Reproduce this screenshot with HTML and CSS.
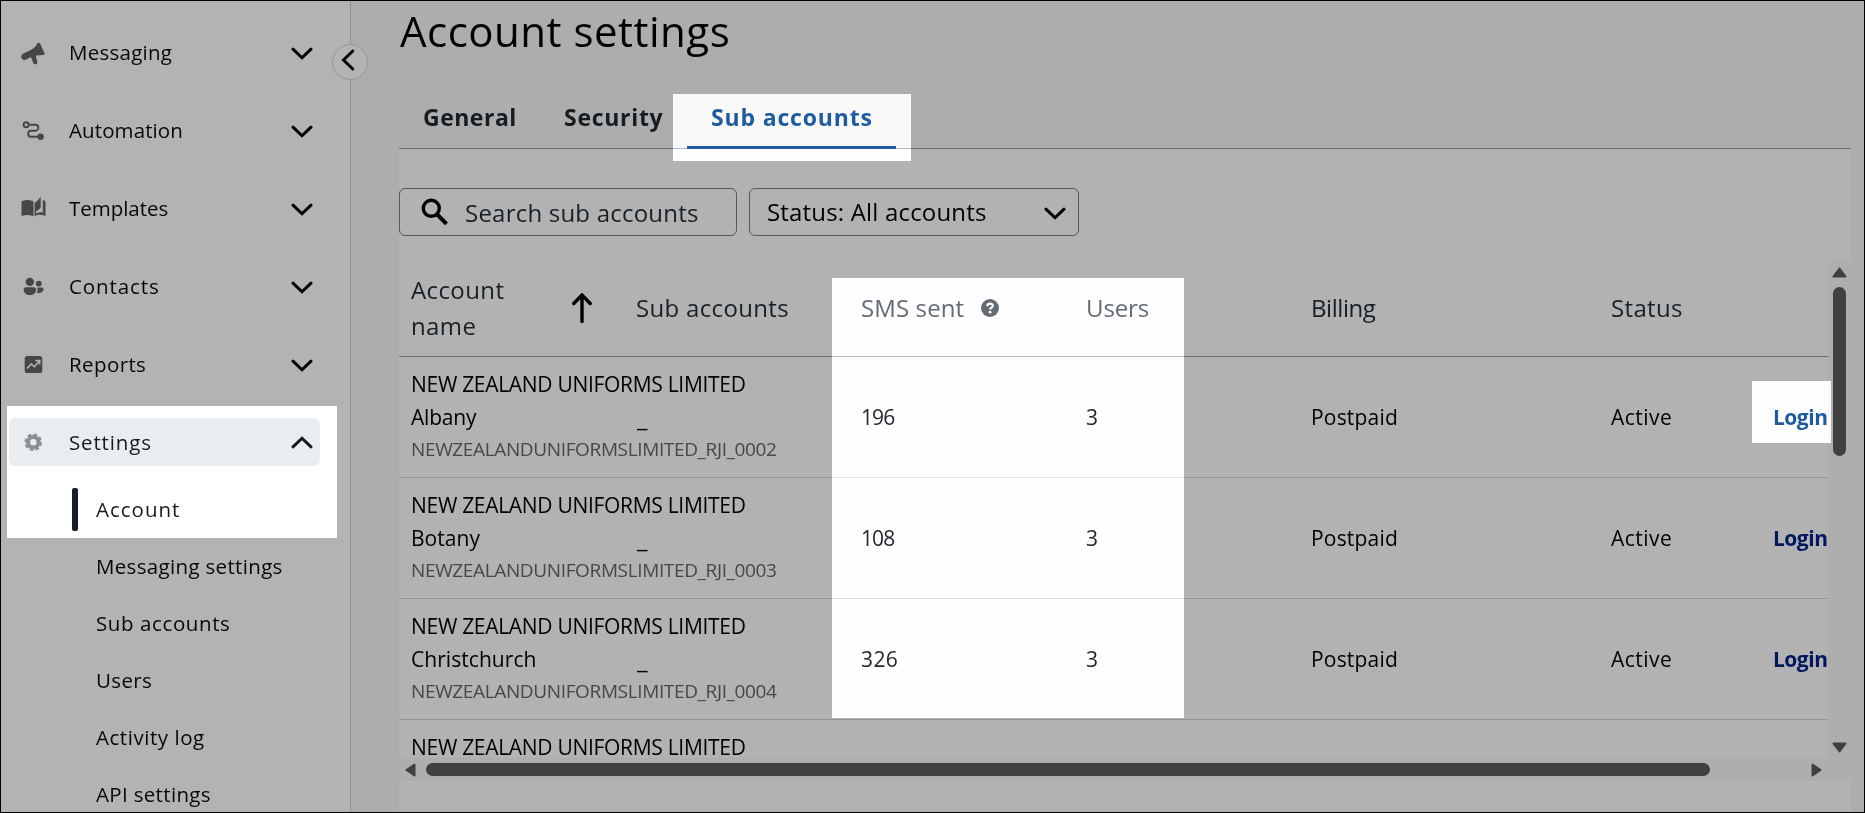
FILE: index.html
```html
<!DOCTYPE html>
<html lang="en">
<head>
<meta charset="utf-8">
<title>Account settings</title>
<link rel="stylesheet" href="styles.css">
</head>
<body>
<svg class="defs" width="0" height="0" aria-hidden="true">
  <symbol id="chev" viewBox="0 0 22 14"><path d="M2 2.2 11 10.8 20 2.2" fill="none" stroke="currentColor" stroke-width="3" stroke-linecap="round"/></symbol>
</svg>
<div class="app">
  <aside class="sidebar">
    <nav class="nav">
      <a class="item"><svg class="ico" viewBox="0 0 28 28"><path d="M19.2 4.8c.8-.4 1.5 0 1.9.7l4.400 9.600c.4 1-.1 1.700-1.100 1.800l-7.600.5 1.500 6.500c.4 2.500-3.200 3.300-4 1l-2.400-6-4.700 2.700c-2 1-4 .2-4.700-1.500-.8-2.200.2-3.900 2-4.700l8.200-3.900c2.500-1.200 4.200-3.100 5.200-5.400.3-.6.6-1 1.300-1.300z"/></svg><span class="w-messaging">Messaging</span><svg class="chev"><use href="#chev"/></svg></a>
      <a class="item"><svg class="ico line" viewBox="0 0 28 28"><circle cx="7.100" cy="8.700" r="2.500"/><path d="M9.600 8.700h6.700a3 3 0 0 1 0 6h-4.200a3 3 0 0 0 0 6H20"/><circle class="dot" cx="21.600" cy="20.700" r="3.200"/></svg><span class="w-automation">Automation</span><svg class="chev"><use href="#chev"/></svg></a>
      <a class="item"><svg class="ico" viewBox="0 0 28 28"><path d="M2.500 7.500c3.500-2 8.500-2 12 0v15c-3.500-2-8.500-2-12-.4zM17 8.300l4.700-5.600v11.400L17 17.500zM15.600 8.500v13.800c3-1.800 6.800-2 10.900-.2V7.200l-2.700-1.300v12.600c-2.500-.4-4.800 0-6.800.9V8z"/></svg><span class="w-templates">Templates</span><svg class="chev"><use href="#chev"/></svg></a>
      <a class="item"><svg class="ico" viewBox="0 0 28 28"><circle cx="10.800" cy="9.900" r="4.200"/><circle cx="19.800" cy="11.600" r="2.900"/><path d="M7 15.300h7.700c1.500 0 2.400 1 2.400 2.300 0 3.500-2.500 5.500-6.200 5.500s-6.300-2-6.300-5.500c0-1.300 1-2.300 2.400-2.300zM18 15.600h4.600c1.100 0 1.900.7 1.900 1.700 0 2.700-2.600 4.200-6.800 3.700 1.100-1.600 1.300-3.600.3-5.400z"/></svg><span class="w-contacts">Contacts</span><svg class="chev"><use href="#chev"/></svg></a>
      <a class="item"><svg class="ico" viewBox="0 0 28 28"><rect x="5.700" y="6" width="17.600" height="17" rx="2.600"/><path class="cut" d="m8 18.500 4.200-4.500 3.200 2.700 5-5.500M16.400 10.600h4.300v4"/></svg><span class="w-reports">Reports</span><svg class="chev"><use href="#chev"/></svg></a>
      <a class="item open"><svg class="ico" viewBox="0 0 28 28"><circle class="gear" cx="14.300" cy="14.300" r="5.200"/><circle class="teeth" cx="14.300" cy="14.300" r="7.600"/></svg><span class="w-settings">Settings</span><svg class="chev up"><use href="#chev"/></svg></a>
    </nav>
    <nav class="subnav">
      <a class="sub current w-account">Account</a>
      <a class="sub w-set">Messaging settings</a>
      <a class="sub w-sub">Sub accounts</a>
      <a class="sub">Users</a>
      <a class="sub w-log">Activity log</a>
      <a class="sub w-set">API settings</a>
    </nav>
    <button class="collapse" aria-label="Collapse"><svg viewBox="0 0 36 36"><path d="M20.800 7 11.500 16l9.300 9" fill="none" stroke="#000" stroke-width="3" stroke-linecap="round"/></svg></button>
  </aside>
  <main class="main">
    <h1>Account settings</h1>
    <div class="tabs">
      <a class="tab">General</a>
      <a class="tab w-sec">Security</a>
      <a class="tab active">Sub accounts</a>
    </div>
    <section class="panel">
      <div class="filters">
        <div class="search"><svg viewBox="0 0 28 28"><circle cx="10.300" cy="10.300" r="8"/><path d="m16.200 16.500 9.300 9.300"/></svg><span>Search sub accounts</span></div>
        <div class="select"><span>Status: All accounts</span><svg class="chev"><use href="#chev"/></svg></div>
      </div>
      <div class="scroller">
        <div class="view">
          <div class="row head">
            <div class="sortable"><span>Account name</span><svg viewBox="0 0 20 30"><path d="M10 28.500V2.500M1.800 10.500 10 2l8.200 8.500" fill="none" stroke="#000" stroke-width="3.400" stroke-linecap="round"/></svg></div>
            <div class="w-hsub">Sub accounts</div>
            <div class="lit grey w-sms">SMS sent<svg class="help" viewBox="0 0 18 18"><circle cx="9" cy="9" r="9"/><path d="M6.300 7.300c0-3.600 5.500-3.400 5.500-.5 0 1.900-2.700 1.900-2.700 3.700"/><circle class="pt" cx="9.100" cy="13.200" r="1.400"/></svg></div>
            <div class="lit grey">Users</div>
            <div class="w-bill">Billing</div>
            <div class="w-stat">Status</div>
            <div></div>
          </div>
          <div class="row">
            <div class="name"><b>NEW ZEALAND UNIFORMS LIMITED</b><b class="w-albany">Albany</b><small>NEWZEALANDUNIFORMSLIMITED_RJI_0002</small></div>
            <div class="none">_</div><div class="lit num">196</div><div class="lit num">3</div><div class="w-post">Postpaid</div><div class="w-active">Active</div><div class="login lit">Login</div>
          </div>
          <div class="row">
            <div class="name"><b>NEW ZEALAND UNIFORMS LIMITED</b><b class="w-plain">Botany</b><small>NEWZEALANDUNIFORMSLIMITED_RJI_0003</small></div>
            <div class="none">_</div><div class="lit num">108</div><div class="lit num">3</div><div class="w-post">Postpaid</div><div class="w-active">Active</div><div class="login">Login</div>
          </div>
          <div class="row">
            <div class="name"><b>NEW ZEALAND UNIFORMS LIMITED</b><b class="w-plain">Christchurch</b><small>NEWZEALANDUNIFORMSLIMITED_RJI_0004</small></div>
            <div class="none">_</div><div class="lit num w-326">326</div><div class="lit num">3</div><div class="w-post">Postpaid</div><div class="w-active">Active</div><div class="login">Login</div>
          </div>
          <div class="row last">
            <div class="name"><b>NEW ZEALAND UNIFORMS LIMITED</b></div>
          </div>
        </div>
        <div class="vbar">
          <svg viewBox="0 0 15 11"><path d="M7.500 1.500 13.500 9.500h-12z"/></svg>
          <div class="vtrack"><i></i></div>
          <svg viewBox="0 0 15 11"><path d="M7.500 9.500 1.500 1.500h12z"/></svg>
        </div>
        <div class="hbar">
          <svg viewBox="0 0 11 14"><path d="M1.500 7 9.500 1.500v11z"/></svg>
          <div class="htrack"><i></i></div>
          <svg viewBox="0 0 11 14"><path d="M9.500 7 1.500 1.500v11z"/></svg>
        </div>
        <div class="corner"></div>
      </div>
    </section>
  </main>
  <div class="spot spot-nav"></div>
  <div class="spot spot-tab"></div>
  <div class="spot spot-cols"></div>
  <div class="spot spot-login"></div>
  <div class="frame"></div>
</div>
</body>
</html>
```

FILE: styles.css
```css
* { box-sizing: border-box; }
body { margin: 0; background: #adadad; font-family: "Open Sans", sans-serif; color: #000; }
.defs { position: absolute; }
.app { position: relative; display: flex; width: 1865px; height: 813px; overflow: hidden; background: #adadad; isolation: isolate; }

/* sidebar */
.sidebar { position: relative; flex: none; width: 351px; background: #b3b3b3; border-right: 1px solid #909797; }
.nav { display: flex; flex-direction: column; gap: 30px; padding: 28px 0 0 9px; }
.item { display: flex; align-items: center; width: 311px; height: 48px; padding: 0 7px 0 10px; border-radius: 6px; font-size: 20.5px; letter-spacing: .1px; color: #04090d; }
.ico { width: 28px; height: 28px; margin-right: 22px; flex: none; fill: #464646; }
.item span { flex: 1; white-space: nowrap; padding-bottom: 1px; }
.line { fill: none; stroke: #464646; stroke-width: 1.9; }
.line .dot { fill: #464646; stroke: none; }
.cut { fill: none; stroke: #b3b3b3; stroke-width: 1.6; }
.gear { fill: none; stroke: #8d8f90; stroke-width: 4; }
.teeth { fill: none; stroke: #8d8f90; stroke-width: 2.4; stroke-dasharray: 3.6 2.369; }
.chev { width: 22px; height: 14px; flex: none; color: #000; position: relative; top: 2px; }
.item.open { position: relative; z-index: 2; background: #e9edf0; color: #151b20; }
.chev.up { transform: rotate(180deg); top: 0; color: #151b20; }
.w-messaging { letter-spacing: .25px; }
.w-templates { letter-spacing: -.03px; }
.w-contacts { letter-spacing: .9px; }
.w-reports { letter-spacing: .4px; }
.w-settings { letter-spacing: .85px; }
.subnav { display: flex; flex-direction: column; padding: 14px 0 0 72px; }
.sub { display: flex; align-items: center; height: 57px; padding-left: 24px; font-size: 20.5px; letter-spacing: .35px; color: #04090d; white-space: nowrap; }
.sub.current { position: relative; z-index: 2; color: #151b20; padding-left: 0; }
.sub.current::before { content: ""; position: relative; top: 1px; width: 6px; height: 43px; margin-right: 18px; border-radius: 2px; background: #17202a; }
.w-account { letter-spacing: .99px; }
.w-set { letter-spacing: .33px; }
.w-sub { letter-spacing: .6px; }
.w-log { letter-spacing: .54px; }
.collapse { position: absolute; left: 332px; top: 44px; width: 36px; height: 36px; padding: 0; border: 1px solid #909797; border-radius: 50%; background: #b3b3b3; }
.collapse svg { display: block; width: 36px; height: 36px; margin: -1px; }

/* main column */
.main { flex: none; width: 1452px; margin-left: 48px; display: flex; flex-direction: column; }
h1 { margin: 6px 0 31px 1px; font-size: 42px; line-height: 50px; font-weight: 400; letter-spacing: .5px; }
.tabs { display: grid; grid-template-columns: 140px 148px 209px; height: 62px; border-bottom: 1px solid #646f7a; }
.tab { height: 62px; padding-left: 24px; font-size: 23px; line-height: 61px; font-weight: 700; letter-spacing: .5px; color: #151c22; white-space: nowrap; }
.w-sec { padding-left: 25px; letter-spacing: .71px; }
.tab.active { position: relative; z-index: 2; letter-spacing: .84px; color: #1e5c9f; border-bottom: 3px solid #1e5c9f; }
.panel { height: 664px; background: #b2b2b2; }
.filters { display: flex; gap: 12px; padding-top: 39px; height: 111px; }
.search, .select { display: flex; align-items: center; height: 48px; border: 1px solid #4f595f; border-radius: 6px; font-size: 24px; white-space: nowrap; }
.search { width: 338px; padding-left: 21px; letter-spacing: .22px; color: #182027; }
.search svg { width: 28px; height: 28px; margin-right: 16px; fill: none; stroke: #000; stroke-width: 3.4; }
.search svg path { stroke-width: 4; }
.select { width: 330px; padding: 0 12px 0 17px; justify-content: space-between; letter-spacing: .18px; }
.select span { padding-bottom: 2px; }

/* table */
.scroller { display: grid; grid-template-columns: 1429px 23px; grid-template-rows: 498px 23px; }
.view { overflow: hidden; }
.row { display: grid; grid-template-columns: 225px 225px 225px 225px 300px 163px 66px; align-items: center; height: 121px; border-bottom: 1px solid #939494; font-size: 21px; white-space: nowrap; }
.row > div { padding-left: 12px; }
.row > .lit { position: relative; z-index: 2; }
.row.head { height: 97px; border-color: #646f7a; font-size: 24px; color: #182027; }
.row.head > div { padding-bottom: 2px; }
.row.head > .sortable { padding-bottom: 0; }
.row.last { height: 41px; border: 0; }
.row > .grey { color: #636c75; letter-spacing: -.1px; }
.row > .w-sms { letter-spacing: .12px; display: flex; align-items: center; }
.help { width: 18px; height: 18px; margin: 2px 0 0 17px; fill: #636c75; }
.help path { fill: none; stroke: #fff; stroke-width: 2.2; }
.help .pt { fill: #fff; }
.w-hsub { letter-spacing: .33px; }
.w-bill { letter-spacing: -.45px; }
.w-stat { letter-spacing: .34px; }
.sortable { display: flex; align-items: center; white-space: normal; line-height: 36px; letter-spacing: .4px; }
.sortable span { width: 161px; padding-right: 50px; }
.sortable svg { width: 20px; height: 30px; }
.name { display: flex; flex-direction: column; align-self: start; padding-top: 11px; width: 420px; line-height: 33px; }
.name b { font-weight: 400; letter-spacing: -.3px; }
.name .w-plain { letter-spacing: .05px; }
.name .w-albany { letter-spacing: -.2px; }
.name small { font-size: 19px; line-height: 31px; letter-spacing: -.36px; color: #474747; }
.none { font-size: 24px; position: relative; left: 1px; }
.num { color: #22282d; letter-spacing: -.9px; }
.row > .w-326 { letter-spacing: .4px; }
.w-post { letter-spacing: .2px; }
.w-active { letter-spacing: .48px; }
.row > .login { padding-left: 11px; color: #00185e; font-weight: 700; letter-spacing: -.5px; }
.row > .login.lit { color: #1e5c9f; }

/* scrollbars */
.vbar { display: flex; flex-direction: column; align-items: center; padding: 7px 0 5px; background: #aeaeae; }
.vbar svg { width: 15px; height: 11px; margin-right: 1px; }
.vbar svg, .hbar svg { flex: none; fill: #404040; stroke: #404040; stroke-width: 2; stroke-linejoin: round; }
.vtrack { flex: 1; padding-top: 9px; margin-right: 1px; }
.vtrack i { display: block; width: 13px; height: 169px; border-radius: 7px; background: #404040; }
.hbar { display: flex; align-items: center; padding: 0 6px; background: #aeaeae; }
.hbar svg { width: 11px; height: 14px; }
.htrack { flex: 1; padding-left: 10px; }
.htrack i { display: block; width: 1284px; height: 13px; border-radius: 7px; background: #404040; }
.corner { background: #aeaeae; }

/* spotlights over the dimmed page */
.spot { position: absolute; z-index: 1; background: #4c4c4c; mix-blend-mode: plus-lighter; pointer-events: none; }
.spot-nav { left: 7px; top: 406px; width: 330px; height: 132px; }
.spot-tab { left: 673px; top: 94px; width: 238px; height: 67px; }
.spot-cols { left: 832px; top: 278px; width: 352px; height: 440px; }
.spot-login { left: 1752px; top: 381px; width: 79px; height: 62px; }
.frame { position: absolute; inset: 0; z-index: 3; border: 1px solid #000; pointer-events: none; }
```
